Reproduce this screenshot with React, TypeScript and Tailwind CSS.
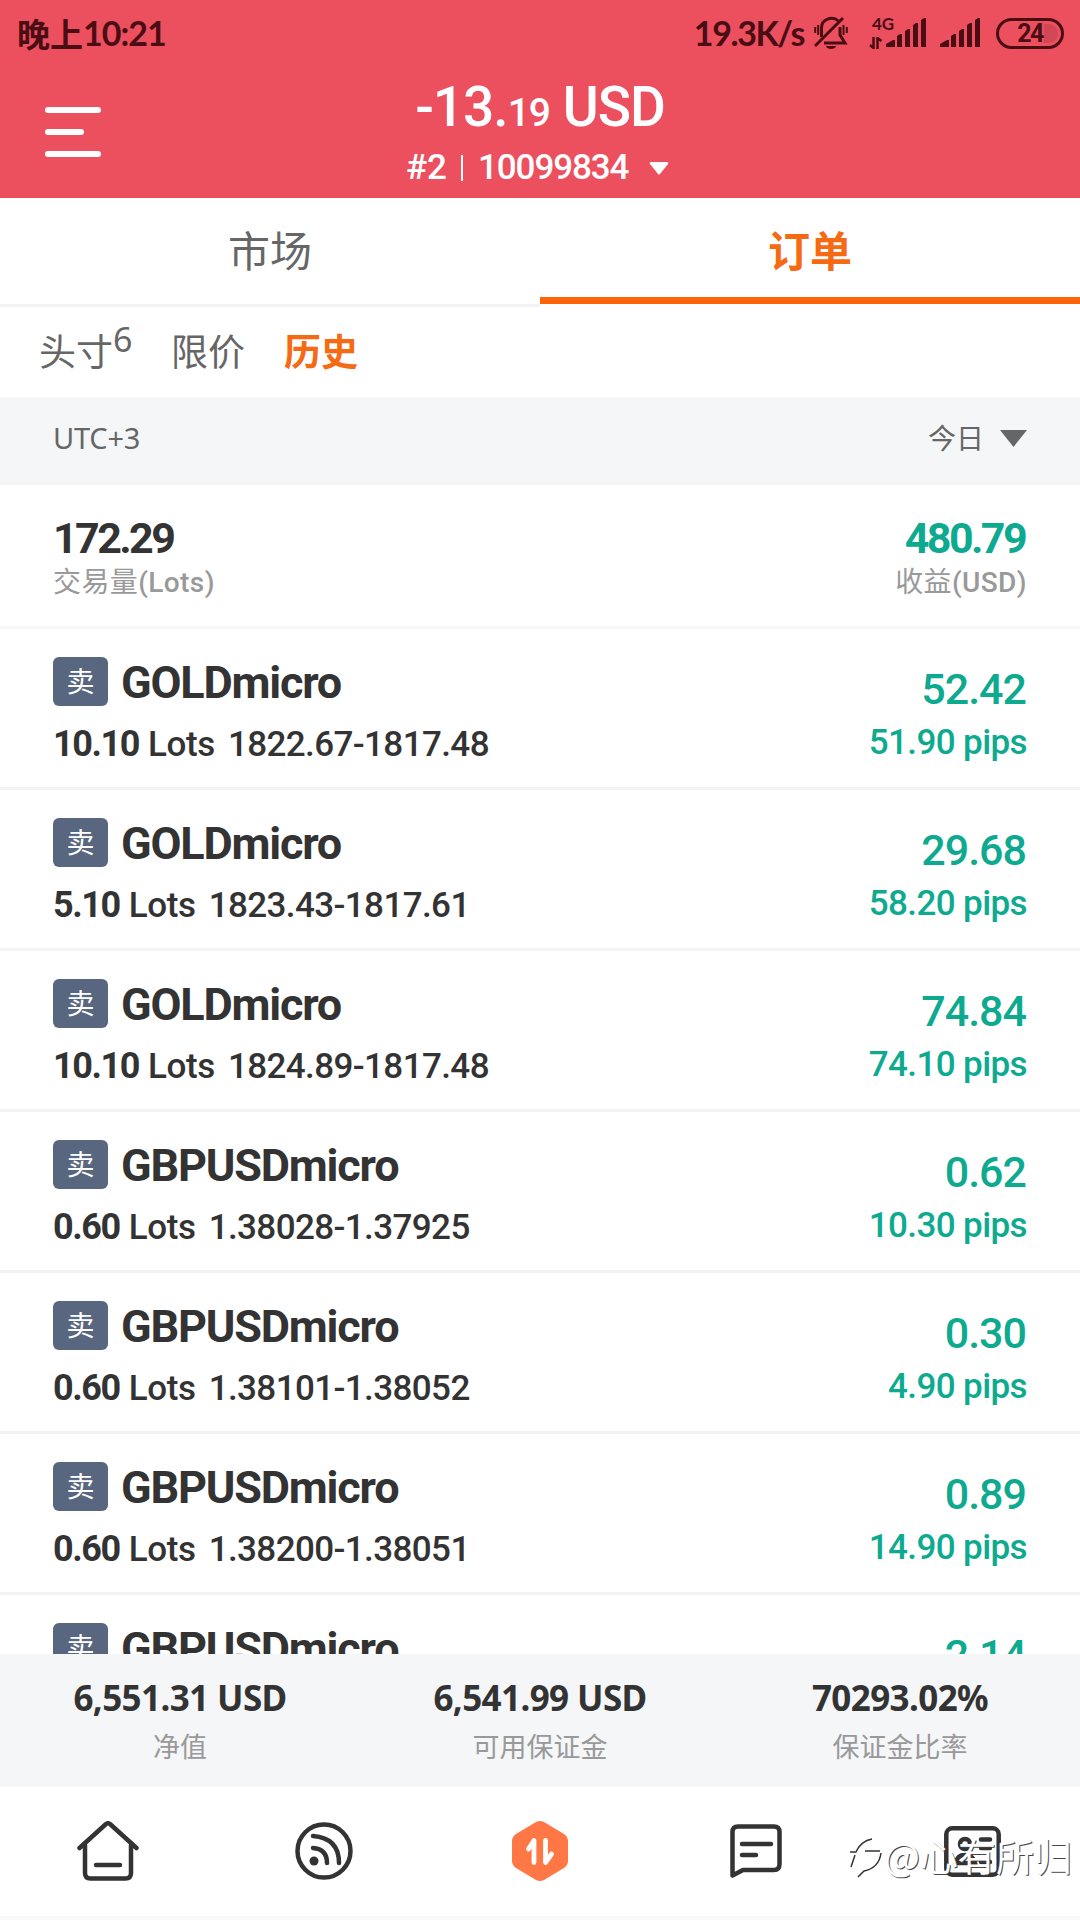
import type { ReactNode } from "react";

type Order = {
  symbol: string;
  lots: string;
  range: string;
  profit: string;
  pips: string;
};

const orders: Order[] = [
  { symbol: "GOLDmicro", lots: "10.10", range: "1822.67-1817.48", profit: "52.42", pips: "51.90" },
  { symbol: "GOLDmicro", lots: "5.10", range: "1823.43-1817.61", profit: "29.68", pips: "58.20" },
  { symbol: "GOLDmicro", lots: "10.10", range: "1824.89-1817.48", profit: "74.84", pips: "74.10" },
  { symbol: "GBPUSDmicro", lots: "0.60", range: "1.38028-1.37925", profit: "0.62", pips: "10.30" },
  { symbol: "GBPUSDmicro", lots: "0.60", range: "1.38101-1.38052", profit: "0.30", pips: "4.90" },
  { symbol: "GBPUSDmicro", lots: "0.60", range: "1.38200-1.38051", profit: "0.89", pips: "14.90" },
];

// Last row, only its top line shows above the totals
const partialOrder = { symbol: "GBPUSDmicro", profit: "2.14" };

const totals = [
  { value: "6,551.31 USD", label: "净值" },
  { value: "6,541.99 USD", label: "可用保证金" },
  { value: "70293.02%", label: "保证金比率" },
];

function SignalBars() {
  return (
    <svg width="40" height="30" viewBox="0 0 40 30" fill="currentColor">
      <path d="M0 29v-3l7-4h2v7zM11 18l3-2h2v13h-5zM19 13l3-2h2v18h-5zM27 7l3-2h2v24h-5zM35 2l3-2h2v29h-5z" />
    </svg>
  );
}

function StatusBar() {
  return (
    <div className="flex h-[66px] items-center justify-between pl-[17px] pr-4 text-[#4a0d14]">
      <div className="flex items-center font-['Noto_Sans_CJK_SC',sans-serif] text-[33px] leading-none font-semibold">
        <span>晚上</span>
        <span className="font-['Lato',sans-serif] text-[34px] font-bold tracking-[-1px]">10:21</span>
      </div>
      <div className="flex items-center">
        <span className="font-['Lato',sans-serif] text-[34px] leading-none font-bold tracking-[-1.4px]">19.3K/s</span>
        <svg className="ml-2.5" width="34" height="34" viewBox="0 0 34 34" fill="none" stroke="currentColor" strokeWidth="3">
          <path d="M7.500 21v-9a10 9.500 0 0 1 17-7M26 11v8l5 8H10M1 30L29 2" />
          <path d="M1.200 11v6M4.200 9v10M29.500 9v10M32.800 11v6" strokeWidth="2" />
          <path d="M12 30h10a5 3 0 0 1-10 0z" fill="currentColor" stroke="none" />
        </svg>
        <div className="ml-[21px] flex h-[31px] w-[17px] flex-col justify-between">
          <span className="ml-[3px] font-['Lato',sans-serif] text-[17px] leading-[11px] font-bold">4G</span>
          <svg width="13" height="12" viewBox="0 0 13 12" fill="none" stroke="currentColor" strokeWidth="2.500">
            <path d="M4.500 0v11L1 8M8.500 12V1l4 3" />
          </svg>
        </div>
        <SignalBars />
        <div className="ml-3.5">
          <SignalBars />
        </div>
        <div className="relative ml-4 flex h-[31px] w-[68px] items-center justify-center rounded-full border-[3px] border-[#4a0d14]">
          <i className="absolute top-[3px] right-[3px] h-[19px] w-[14px] rounded-r-full bg-[#d24656]" />
          <span className="relative font-['Roboto',sans-serif] text-[25px] leading-none font-bold tracking-[-1.5px]">24</span>
        </div>
      </div>
    </div>
  );
}

function Header() {
  return (
    <header className="h-[198px] shrink-0 bg-[#ec505f]">
      <StatusBar />
      <div className="flex h-[132px] text-white">
        <div className="flex w-[400px] flex-col gap-4 pt-[41px] pl-[45px]">
          <i className="h-1.5 w-[56px] rounded-full bg-white" />
          <i className="h-1.5 w-[39px] rounded-full bg-white" />
          <i className="h-1.5 w-[56px] rounded-full bg-white" />
        </div>
        <div className="w-[280px] font-['Roboto',sans-serif] font-medium">
          <div className="flex h-[81px] items-baseline justify-center pt-2 text-[55px] leading-[66px] tracking-[-1px] whitespace-pre">
            <span>-13.</span>
            <span className="text-[39px]">19</span>
            <span> USD</span>
          </div>
          <div className="flex h-[42px] items-center pl-[6px] text-[35px] leading-[42px]">
            <span>#2</span>
            <i className="mr-[15px] ml-[14px] h-[26px] w-0.5 bg-white" />
            <span className="tracking-[-1.1px]">10099834</span>
            <svg className="ml-[21px]" width="20" height="13" viewBox="0 0 20 13" fill="currentColor">
              <path d="M2 0h16q2 0 1 2l-8 10q-1 1-2 0L1 2Q0 0 2 0z" />
            </svg>
          </div>
        </div>
      </div>
    </header>
  );
}

function Symbol({ name }: { name: string }) {
  return (
    <div className="flex h-[49px] items-center">
      <span className="flex h-[49px] w-[55px] justify-center rounded-md bg-[#58677f] font-['Noto_Sans_CJK_SC',sans-serif] text-[28px] leading-[47px] text-white">
        卖
      </span>
      <span className="ml-[13px] pt-0.5 text-[45px] leading-[52px] font-bold tracking-[-1.2px]">{name}</span>
    </div>
  );
}

function OrderRow({ order }: { order: Order }) {
  return (
    <div className="flex h-[161px] shrink-0 justify-between border-b-[3px] border-[#f3f3f4] px-[53px] font-['Roboto',sans-serif]">
      <div className="pt-7 text-[#333]">
        <Symbol name={order.symbol} />
        <div className="mt-[17px] flex items-baseline text-[35px] leading-[42px]">
          <span className="text-[36px] font-bold tracking-[-1.4px]">{order.lots}</span>
          <span className="ml-[9px] font-medium tracking-[-0.4px]">Lots</span>
          <span className="ml-[13px] font-medium tracking-[-0.6px]">{order.range}</span>
        </div>
      </div>
      <div className="pt-[34px] text-right font-medium text-[#0daa90]">
        <div className="mr-px text-[43px] leading-[52px] tracking-[-1px]">{order.profit}</div>
        <div className="mt-0.5 text-[35px] leading-[52px] tracking-[-0.6px]">{order.pips} pips</div>
      </div>
    </div>
  );
}

function NavItem({ children }: { children: ReactNode }) {
  return <div className="flex flex-1 items-center justify-center">{children}</div>;
}

function BottomNav() {
  return (
    <nav className="relative flex h-[133px] shrink-0 border-b-4 border-[#fafafa] bg-white pb-[1px] text-[#333]">
      <NavItem>
        <svg width="62" height="60" viewBox="0 0 62 60" fill="none" stroke="currentColor" strokeWidth="4.500" strokeLinecap="round" strokeLinejoin="round">
          <path d="M2.500 27L29 3q2-1.500 4 0l26.500 24M8 24v28q0 5.500 5.500 5.500h35q5.500 0 5.500-5.500V24M19 44h24" />
        </svg>
      </NavItem>
      <NavItem>
        <svg width="58" height="58" viewBox="0 0 58 58" fill="none" stroke="currentColor" strokeWidth="4.500" strokeLinecap="round">
          <circle cx="29" cy="29" r="26.500" />
          <path d="M18 14q26 2 26 27M18 26q14 1 14 15" />
          <circle cx="19" cy="39" r="4.500" fill="currentColor" stroke="none" />
        </svg>
      </NavItem>
      <NavItem>
        <svg width="56" height="60" viewBox="0 0 56 60">
          <path d="M24 1q4-2 8 0l20 12q4 3 4 7v20q0 4-4 7L32 59q-4 2-8 0L4 47q-4-3-4-7V20q0-4 4-7z" fill="#ff7744" />
          <path d="M16.500 28l5.500-8.500v22M33.500 19.500v22l6-8.500" fill="none" stroke="#fff" strokeWidth="4.800" strokeLinecap="round" strokeLinejoin="round" />
        </svg>
      </NavItem>
      <NavItem>
        <svg width="52" height="54" viewBox="0 0 52 54" fill="none" stroke="currentColor" strokeWidth="4.500" strokeLinecap="round" strokeLinejoin="round">
          <path d="M8 2.500h36q5.500 0 5.500 5.500v32q0 6-5.500 6H13L2.500 51.500V8q0-5.500 5.500-5.500zM12 20h29M12 31h14" />
        </svg>
      </NavItem>
      <NavItem>
        <svg width="57" height="51" viewBox="0 0 57 51" fill="none" stroke="currentColor" strokeWidth="4.500" strokeLinecap="round">
          <rect x="2.300" y="2.300" width="52.400" height="46.400" rx="6" />
          <circle cx="21" cy="18" r="5" />
          <path d="M12 37q1-8 9-8t10 8zM37 13.500h9M37 22h9M37 36h9" />
        </svg>
      </NavItem>

      {/* watermark */}
      <div className="absolute right-[8px] bottom-[36px] flex items-center font-['Noto_Sans_CJK_SC',sans-serif] text-[38px] leading-[44px] text-white [text-shadow:1px_1px_0_#444]">
        <svg className="mt-2 mr-0.5" width="32" height="42" viewBox="0 0 32 42" fill="none">
          <path d="M0 14h6Q11 3 22 1M31 15q-2 15-17 18l-6 6M15 13h15M5 17L1 29" stroke="#333" strokeWidth="1.500" />
        </svg>
        <span>@心有所归</span>
      </div>
    </nav>
  );
}

export default function App() {
  return (
    <div className="flex h-[1920px] w-[1080px] flex-col overflow-hidden bg-white font-['Noto_Sans','Noto_Sans_CJK_SC',sans-serif]">
      <Header />

      {/* Tabs */}
      <div className="flex h-[109px] shrink-0 text-[42px] leading-[106px]">
        <div className="flex-1 border-b-[3px] border-[#f3f3f4] text-center text-[#666]">市场</div>
        <div className="mb-[3px] h-[106px] flex-1 border-b-[7px] border-[#fb6507] text-center font-bold text-[#f56a12]">订单</div>
      </div>

      <div className="flex h-[90px] shrink-0 pl-[39px] text-[37px] leading-[90px] text-[#666]">
        <span>头寸</span>
        <span className="w-[58px] text-[34px] leading-[64px]">6</span>
        <span>限价</span>
        <span className="ml-[39px] font-bold text-[#f56a12]">历史</span>
      </div>

      <div className="flex h-[88px] shrink-0 items-center justify-between border-b-[3px] border-[#f3f3f4] bg-[#f4f6f8] px-[53px] pb-[3px] text-[29px] text-[#666]">
        <span className="tracking-[-0.2px]">UTC+3</span>
        <div className="flex items-center gap-4 text-[28px]">
          <span>今日</span>
          <svg width="27" height="17" viewBox="0 0 27 17" fill="currentColor">
            <path d="M0 0h27L13.500 17z" />
          </svg>
        </div>
      </div>

      {/* Volume and profit summary */}
      <div className="flex h-[144px] shrink-0 justify-between border-b-[3px] border-[#f4f6f8] px-[53px] pt-[27px] font-['Roboto','Noto_Sans_CJK_SC',sans-serif]">
        <div>
          <div className="text-[43px] leading-[52px] font-bold tracking-[-2.6px] text-[#333]">172.29</div>
          <div className="mt-px text-[28px] leading-[36px] tracking-[0.4px] text-[#999]">
            交易量<span className="font-medium">(Lots)</span>
          </div>
        </div>
        <div className="text-right">
          <div className="mr-0.5 text-[43px] leading-[52px] font-bold tracking-[-2.6px] text-[#0daa90]">480.79</div>
          <div className="mt-px text-[28px] leading-[36px] tracking-[0.4px] text-[#999]">
            收益<span className="font-medium">(USD)</span>
          </div>
        </div>
      </div>

      <div className="flex min-h-0 flex-1 flex-col overflow-hidden">
        {orders.map((order) => (
          <OrderRow key={order.range} order={order} />
        ))}
        <div className="flex justify-between px-[53px] font-['Roboto',sans-serif]">
          <div className="pt-7 text-[#333]">
            <Symbol name={partialOrder.symbol} />
          </div>
          <div className="mr-px pt-[34px] text-[43px] leading-[52px] font-medium tracking-[-1px] text-[#0daa90]">
            {partialOrder.profit}
          </div>
        </div>
      </div>

      <div className="grid h-[133px] shrink-0 grid-cols-3 bg-[#f4f6f8] pt-[22px] text-center">
        {totals.map((total) => (
          <div key={total.label}>
            <div className="text-[35px] leading-[44px] font-bold tracking-[-0.6px] text-[#333]">{total.value}</div>
            <div className="mt-[7px] text-[27px] leading-[40px] text-[#999]">{total.label}</div>
          </div>
        ))}
      </div>

      <BottomNav />
    </div>
  );
}
